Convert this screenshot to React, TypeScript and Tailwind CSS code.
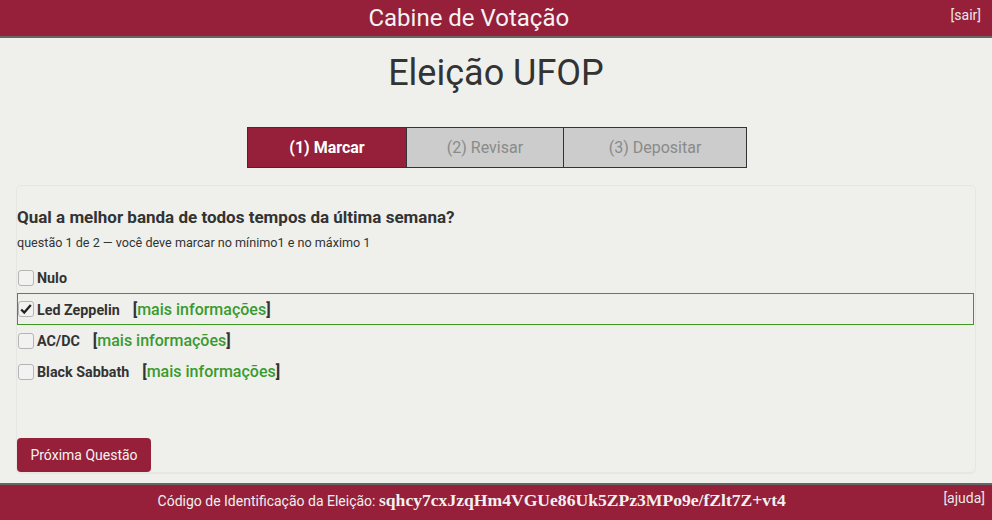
const options = [
  { name: "Nulo", info: false, checked: false },
  { name: "Led Zeppelin", info: true, checked: true },
  { name: "AC/DC", info: true, checked: false },
  { name: "Black Sabbath", info: true, checked: false },
];

function Box({ checked }: { checked: boolean }) {
  return (
    <span className="w-4 h-4 rounded-[3px] border border-[#b5b5b5] bg-[#f2f2f2] flex items-center justify-center shrink-0">
      {checked && (
        <svg viewBox="0 0 16 16" className="w-3.5 h-3.5">
          <path d="M2.5 8.5 L6 12 L13.5 3.5" fill="none" stroke="#222" strokeWidth="2.6" />
        </svg>
      )}
    </span>
  );
}

export default function App() {
  return (
    <div className="min-h-[520px] bg-[#eff0eb] flex flex-col font-['Roboto',sans-serif] text-[#333]">
      <header className="h-[38px] bg-[#961f39] border-b-2 border-[#666] flex items-center pr-[11px]">
        <h1 className="flex-1 text-center text-[24px] text-[#f3f3f3] leading-none mr-[13px]">Cabine de Votação</h1>
        <a className="text-[14px] text-[#e8e8e8] -mt-[6px]">[sair]</a>
      </header>

      <main className="flex-1 flex flex-col items-center">
        <h2 className="mt-[14px] text-[36px] leading-[42px] text-[#333]">Eleição UFOP</h2>

        <div className="mt-[33px] ml-[2px] flex border border-[#333] h-[41px] text-[16px]">
          <div className="w-[158px] bg-[#961f39] text-white font-bold flex items-center justify-center">(1) Marcar</div>
          <div className="w-[157px] bg-[#cccccc] text-[#8a8a8a] border-l border-[#333] flex items-center justify-center">(2) Revisar</div>
          <div className="w-[183px] bg-[#cccccc] text-[#8a8a8a] border-l border-[#333] flex items-center justify-center">(3) Depositar</div>
        </div>

        <section className="mt-[17px] w-[960px] rounded-[5px] border border-[#e6e7e2] shadow-[0_1px_1px_rgba(0,0,0,0.04)] pt-[21px] flex flex-col">
          <h3 className="text-[17px] font-bold leading-[21px] text-[#333]">Qual a melhor banda de todos tempos da última semana?</h3>
          <p className="mt-[7px] text-[12.6px] leading-[16px] text-[#333]">questão 1 de 2 — você deve marcar no mínimo1 e no máximo 1</p>

          <div className="mt-[11px] flex flex-col">
            {options.map((o) => (
              <div
                key={o.name}
                className={
                  o.checked
                    ? "h-[32px] flex items-center gap-[3px] border border-[#3b9a1f] mr-[1px]"
                    : "h-[31px] flex items-center gap-[3px] pl-[1px]"
                }
              >
                <Box checked={o.checked} />
                <span className="text-[14.3px] font-bold mt-[3px]">{o.name}</span>
                {o.info && (
                  <span className="ml-[10px] text-[16px] mt-[1px]">
                    <span className="font-bold">[</span>
                    <a className="text-[#3a9a30] font-medium">mais informações</a>
                    <span className="font-bold">]</span>
                  </span>
                )}
              </div>
            ))}
          </div>

          <div className="mt-[51px]">
            <button className="h-[34px] w-[134px] rounded-[4px] bg-[#961f39] text-[14px] text-[#f3f3f3]">Próxima Questão</button>
          </div>
        </section>
      </main>

      <footer className="mt-[10px] h-[38px] bg-[#961f39] border-t-2 border-[#666] flex items-start pt-[2px] pr-[7px]">
        <p className="flex-1 text-center text-[14px] text-[#f0f0f0]">
          Código de Identificação da Eleição:{" "}
          <span className="font-['Liberation_Serif',serif] font-bold text-[17.6px]">sqhcy7cxJzqHm4VGUe86Uk5ZPz3MPo9e/fZlt7Z+vt4</span>
        </p>
        <a className="text-[14px] text-[#e8e8e8] mt-[1px]">[ajuda]</a>
      </footer>
    </div>
  );
}
